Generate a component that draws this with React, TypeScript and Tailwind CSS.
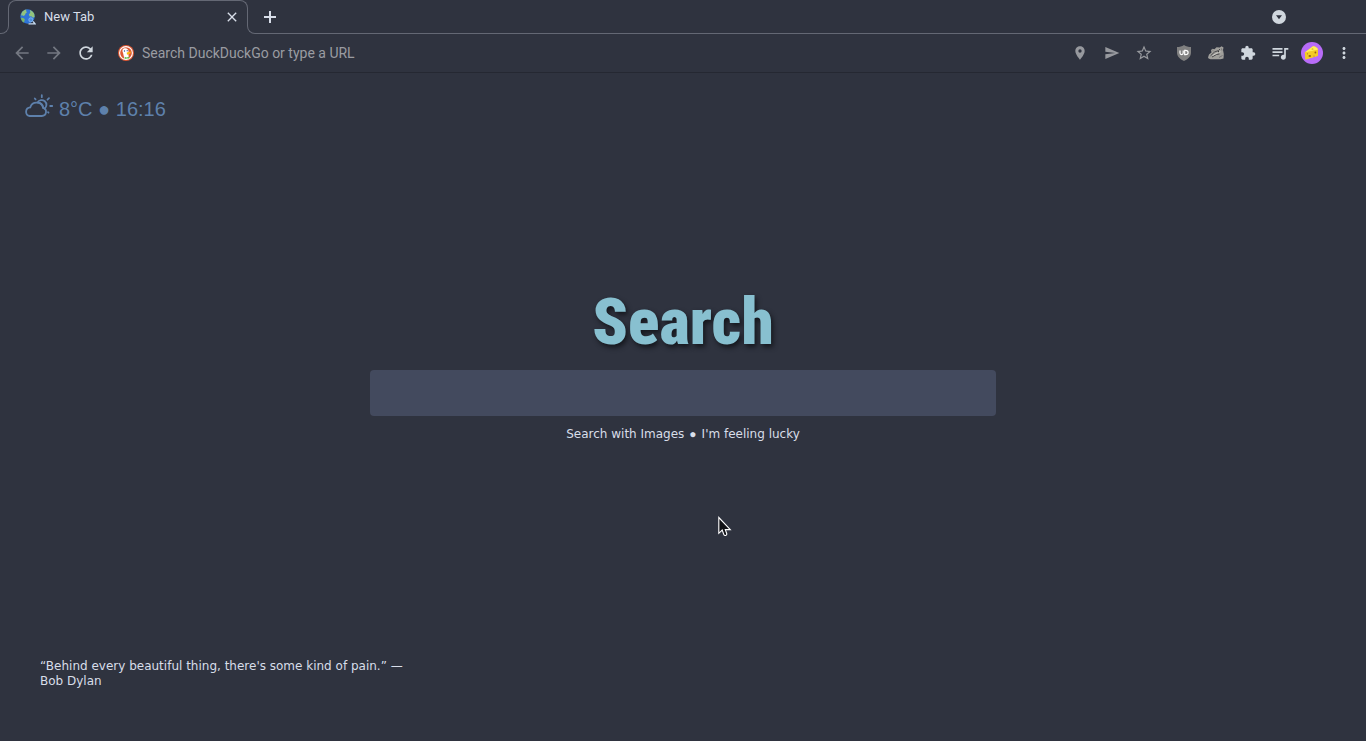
import type { ReactNode } from "react";
import {
  MdArrowBack,
  MdArrowForward,
  MdClose,
  MdExtension,
  MdLocationOn,
  MdMoreVert,
  MdQueueMusic,
  MdRefresh,
  MdSend,
  MdStarBorder,
} from "react-icons/md";

function IconButton({ label, className = "", children }: { label: string; className?: string; children: ReactNode }) {
  return (
    <button type="button" aria-label={label} className={`flex size-6 shrink-0 items-center justify-center ${className}`}>
      {children}
    </button>
  );
}

function Globe() {
  return (
    <svg viewBox="0 0 16 16" className="size-4 shrink-0" aria-hidden="true">
      <circle cx="7.5" cy="7.5" r="7.2" fill="#2f74d8" />
      <path d="M1.800 3.400C3 1.700 4.600.6 6.500.4L6 2l1 1.200L5.500 4.400 5 6 3.500 7 2.300 6.200 1 6.600Z" fill="#93c47d" />
      <path d="M1 8.700l2.300.2 1.600 1.400-.8 2.900-.6.300C2 12.400 1.200 10.700 1 8.700Z" fill="#7cb868" />
      <path d="M10 .9c2 .8 3.600 2.200 4.300 4.100l.3 3-1.600.7-1.700-1.500-1.600.2-.9-2 1.500-1.700Z" fill="#93c47d" />
      <circle cx="10.800" cy="10.800" r="2" fill="#4b8fe0" stroke="#8dbcf0" strokeWidth=".8" />
      <path d="M8.500 14.900h6.500l-1.900-2.500" fill="none" stroke="#c8dcf2" strokeWidth="1.400" />
    </svg>
  );
}

function Duck() {
  return (
    <svg viewBox="0 0 16 16" className="size-4 shrink-0" aria-hidden="true">
      <circle cx="8" cy="8" r="8" fill="#de5833" />
      <circle cx="8" cy="8" r="6.400" fill="#de5833" stroke="#fff" strokeWidth="1.100" />
      <path d="M4.700 4.400C5.600 2.700 9.200 2.700 10.200 5c.5 1.200.4 2 .1 3l.5 5.400c-1.400.8-3 .9-4.400.5L5 7.800C4.400 6.500 4.300 5.300 4.700 4.400Z" fill="#fff" />
      <path d="M8.700 7.400l4.300-.8-.7 1.900-3.300 1.200Z" fill="#fdb90a" />
      <path d="M6.600 11.800l2 .6 2.500-.7.2 1.900-2.300-.1-2.200.6Z" fill="#65bc46" />
      <circle cx="6.500" cy="6" r=".7" fill="#2d4f8e" />
      <circle cx="9.200" cy="5.700" r=".6" fill="#2d4f8e" />
    </svg>
  );
}

function Shield() {
  return (
    <svg viewBox="0 0 16 16" className="size-4" aria-hidden="true">
      <path d="M8 0c2 1.500 4.500 2 7 2v5.500c0 4-3 6.700-7 8.500-4-1.800-7-4.500-7-8.500V2c2.500 0 5-.5 7-2Z" fill="#808080" />
      <path d="M4 5.400v2.700q0 1.500 1.600 1.500T7.200 8.100V5.400M8.700 5.400v4.200h1q2.400 0 2.400-2.100t-2.400-2.100Z" fill="none" stroke="#fff" strokeWidth="1.200" />
    </svg>
  );
}

function Badger() {
  return (
    <svg viewBox="0 0 16 16" className="size-4" aria-hidden="true">
      <path d="M0 12.500 1 9.500l2.500-2L3 5 4.600 3.800 6.500 4.300 8.500 2.200l3.300.2L13.500 1.200l2 1.200L15 5l.8 4-.3 4.500-3 .8H2.500L.6 13.500Z" fill="#a09f9b" />
      <path d="M2.500 10.800 6.500 7l4-1.500 1.500-1.500M4 12 8.500 9.500l3-.5" fill="none" stroke="#48484b" strokeWidth="1" />
      <path d="M4.500 10.600 9 8l3.500-1.200" fill="none" stroke="#d6d5cf" strokeWidth=".9" />
      <path d="M11 12.500l3.500-2M4.500 5.200l1 .8M13.500 3.500l.5 2" stroke="#66666a" strokeWidth=".8" />
      <circle cx="10.400" cy="6.700" r=".6" fill="#222" />
    </svg>
  );
}

function CheeseAvatar() {
  return (
    <svg viewBox="0 0 22 22" className="size-[22px]" aria-hidden="true">
      <circle cx="11" cy="11" r="11" fill="#b86cf8" />
      <path d="M3.800 10.500 12 4.300q3.800.3 5 3.400v6.100L4.600 17.400Z" fill="#f7d42f" />
      <path d="M3.800 10.500 12 4.300q3.800.3 5 3.400Z" fill="#fff05a" />
      <path d="M3.800 10.500 17 7.700v6.100L4.600 17.400Z" fill="#f3cb24" />
      <ellipse cx="8.800" cy="14" rx="1.300" ry="1" fill="#96620f" />
      <circle cx="14.400" cy="10.500" r=".9" fill="#96620f" />
      <circle cx="13" cy="14" r=".6" fill="#b57b17" />
      <circle cx="6.500" cy="11.800" r=".6" fill="#b57b17" />
      <ellipse cx="11.500" cy="6.900" rx="1" ry=".5" fill="#c99518" />
    </svg>
  );
}

function WeatherIcon() {
  return (
    <svg viewBox="0 0 30 30" className="size-[30px] shrink-0" fill="none" stroke="#5e81ac" strokeWidth="1.800" strokeLinecap="round" aria-hidden="true">
      <path d="M5.600 22h12.200a4.200 4.200 0 0 0 1.300-8.200A6.600 6.600 0 0 0 6.300 13.300 4.400 4.400 0 0 0 5.600 22Z" />
      <path d="M13.500 8.400a4.800 4.800 0 1 1 7 6.300M13.500 8.400c3.600.2 5.300 2.500 5.700 5.400" />
      <path d="M17.800 1.200v2M10.800 4.500l.8.900M25 4.200l-1.500 1.500M26.200 12h2M24 18.200l.5.500" />
    </svg>
  );
}

function MousePointer() {
  return (
    <svg viewBox="0 0 14 22" className="pointer-events-none absolute top-[516px] left-[718px] h-[22px] w-[14px]" aria-hidden="true">
      <path d="M.8 1.500v15.800l3.400-3.200 1.500 4.200c.8 2 3.600 1.300 3-.8l-1.400-3.900h5Z" fill="#111216" stroke="#fff" strokeWidth="1.100" />
    </svg>
  );
}

function TabStrip() {
  return (
    <div className="flex h-[34px] text-[#d8dee9]">
      <span className="h-2 w-[9px] shrink-0 self-end rounded-br-lg border-r border-b border-[#646874]" />
      <div className="-ml-px h-[26px] w-60 shrink-0 rounded-t-lg border-x border-t border-[#646874]">
        <div className="flex h-8 items-center pr-[7px] pl-[11px]">
          <Globe />
          <span className="ml-2 flex-1 text-[13px]">New Tab</span>
          <button type="button" aria-label="Close tab" className="flex size-4 items-center justify-center">
            <MdClose size={16} />
          </button>
        </div>
      </div>
      <div className="relative -ml-px flex flex-1 items-center justify-between pr-[75px] pl-[11px]">
        <span className="pointer-events-none absolute inset-x-0 bottom-0 h-2 rounded-bl-lg border-b border-l border-[#646874]" />
        <IconButton label="New tab">
          <svg viewBox="0 0 12 12" className="size-3" aria-hidden="true">
            <path d="M6 0v12M0 6h12" stroke="currentColor" strokeWidth="2" />
          </svg>
        </IconButton>
        <IconButton label="Search tabs">
          <svg viewBox="0 0 14 14" className="size-[14px]" aria-hidden="true">
            <circle cx="7" cy="7" r="7" fill="#d0d7de" />
            <path d="M4 5.200h6L7 9.200Z" fill="#2f333f" />
          </svg>
        </IconButton>
      </div>
    </div>
  );
}

function Toolbar() {
  return (
    <div className="flex h-[39px] items-center gap-2 border-b border-[#252832] px-[10px] text-[#d0d7de]">
      <IconButton label="Back" className="text-[#747882]">
        <MdArrowBack size={20} />
      </IconButton>
      <IconButton label="Forward" className="text-[#747882]">
        <MdArrowForward size={20} />
      </IconButton>
      <IconButton label="Reload">
        <MdRefresh size={20} />
      </IconButton>
      <div className="ml-3 flex flex-1 items-center gap-2">
        <Duck />
        <input
          type="text"
          aria-label="Address bar"
          placeholder="Search DuckDuckGo or type a URL"
          className="min-w-0 flex-1 bg-transparent text-[14px] leading-5 outline-none placeholder:text-[#9a9ca2]"
        />
      </div>
      <IconButton label="Location" className="text-[#97999e]">
        <MdLocationOn size={16} />
      </IconButton>
      <IconButton label="Send page" className="text-[#97999e]">
        <MdSend size={16} />
      </IconButton>
      <IconButton label="Bookmark" className="text-[#97999e]">
        <MdStarBorder size={18} />
      </IconButton>
      <IconButton label="Content blocker" className="ml-2">
        <Shield />
      </IconButton>
      <IconButton label="Tracker blocker">
        <Badger />
      </IconButton>
      <IconButton label="Extensions">
        <MdExtension size={16} />
      </IconButton>
      <IconButton label="Media controls">
        <MdQueueMusic size={20} />
      </IconButton>
      <IconButton label="Profile">
        <CheeseAvatar />
      </IconButton>
      <IconButton label="Menu">
        <MdMoreVert size={18} />
      </IconButton>
    </div>
  );
}

export default function App() {
  return (
    <div className="relative flex min-h-screen flex-col bg-[#2f333f] font-['DejaVu_Sans',sans-serif] text-xs text-[#d8dee9]">
      <header className="font-[Roboto,sans-serif]">
        <TabStrip />
        <Toolbar />
      </header>
      <main className="flex flex-1 flex-col">
        <div className="flex items-center gap-[5px] px-6 pt-5 font-['Liberation_Sans',sans-serif] text-xl leading-8 text-[#5e81ac]">
          <WeatherIcon />
          <p>8°C ● 16:16</p>
        </div>
        <section className="mt-[157px] flex flex-col items-center px-6">
          <h1 className="font-['Roboto_Condensed',sans-serif] text-[65px] leading-[80px] font-black text-[#88c0d0] [text-shadow:2px_3px_5px_#15171d]">
            Search
          </h1>
          <input
            type="text"
            aria-label="Search"
            className="mt-2 h-[46px] w-full max-w-[626px] rounded bg-[#434a5e] px-4 text-base outline-none"
          />
          <nav className="mt-[10px] flex gap-[5px] leading-4">
            <a href="#images">Search with Images</a>
            <span className="font-['Liberation_Sans',sans-serif]">●</span>
            <a href="#lucky">I'm feeling lucky</a>
          </nav>
        </section>
        <blockquote className="mt-auto mb-[52px] ml-10 max-w-[380px] leading-[15px]">
          “Behind every beautiful thing, there's some kind of pain.” — Bob Dylan
        </blockquote>
      </main>
      <MousePointer />
    </div>
  );
}
